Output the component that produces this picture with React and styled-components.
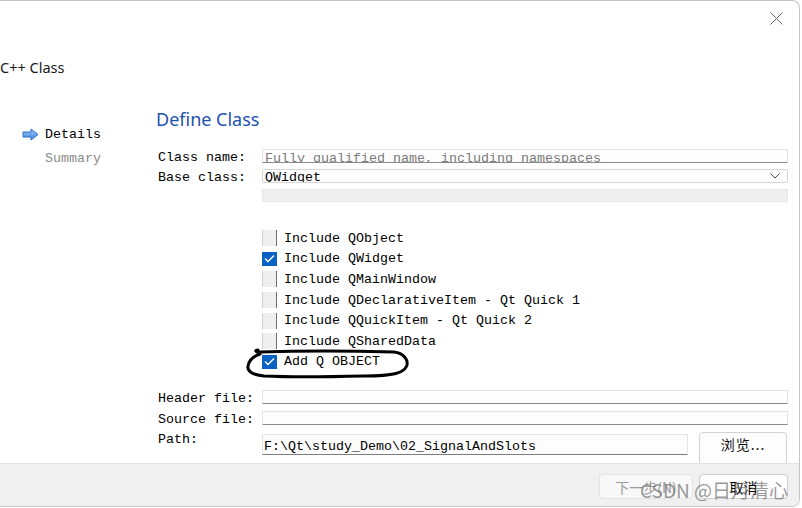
import React from "react";
import styled, { createGlobalStyle } from "styled-components";

const GlobalStyle = createGlobalStyle`
  html, body {
    margin: 0;
    padding: 0;
    background: #ffffff;
  }
  body {
    font-family: "Liberation Mono", "Noto Sans CJK SC", monospace;
    font-size: 13.33px;
    color: #000;
  }
`;

const checks = [
  { label: "Include QObject", checked: false },
  { label: "Include QWidget", checked: true },
  { label: "Include QMainWindow", checked: false },
  { label: "Include QDeclarativeItem - Qt Quick 1", checked: false },
  { label: "Include QQuickItem - Qt Quick 2", checked: false },
  { label: "Include QSharedData", checked: false },
  { label: "Add Q OBJECT", checked: true },
];

const ArrowIcon = () => (
  <svg width="17" height="13" viewBox="0 0 17 13">
    <defs>
      <linearGradient id="arr" x1="0" y1="0" x2="0" y2="1">
        <stop offset="0" stopColor="#9cc7f5" />
        <stop offset="1" stopColor="#3d86de" />
      </linearGradient>
    </defs>
    <path
      d="M1 4 H9 V1 L16 6.5 L9 12 V9 H1 Z"
      fill="url(#arr)"
      stroke="#2a6fc9"
      strokeWidth="1"
      strokeLinejoin="round"
    />
  </svg>
);

const Chevron = () => (
  <svg width="10" height="6" viewBox="0 0 10 6">
    <path d="M0.5 0.5 L5 5 L9.5 0.5" fill="none" stroke="#444" strokeWidth="1" />
  </svg>
);

const Tick = () => (
  <svg width="11" height="9" viewBox="0 0 11 9">
    <path d="M1 4.5 L4 7.5 L10 1.5" fill="none" stroke="#fff" strokeWidth="1.4" />
  </svg>
);

const CloseIcon = () => (
  <svg width="13" height="13" viewBox="0 0 13 13">
    <path d="M0.5 0.5 L12.5 12.5 M12.5 0.5 L0.5 12.5" stroke="#6a6a6a" strokeWidth="1" />
  </svg>
);

const Window = styled.div`
  position: relative;
  width: 799px;
  height: 505px;
  border-top: 1px solid #c4c4c4;
  border-right: 1px solid #c4c4c4;
  border-bottom: 1px solid #c4c4c4;
  border-radius: 0 8px 8px 0;
  overflow: hidden;
  display: flex;
  flex-direction: column;
`;

const TitleBar = styled.div`
  height: 44px;
  display: flex;
  justify-content: flex-end;
  align-items: flex-start;
  padding: 11px 16px 0 0;
  box-sizing: border-box;
`;

const Heading = styled.div`
  height: 55px;
  line-height: 44px;
  font-family: "Noto Sans", "Open Sans", sans-serif;
  font-size: 14.5px;
  color: #1a1a1a;
`;

const Body = styled.div`
  height: 363px;
  display: flex;
  overflow: hidden;
`;

const Sidebar = styled.div`
  width: 156px;
  padding: 22px 0 0 22px;
  box-sizing: border-box;
`;

const NavItem = styled.div`
  height: 24px;
  display: flex;
  align-items: center;
  gap: 6px;
  color: ${(p) => (p.active ? "#000" : "#8a8a8a")};
  padding-left: ${(p) => (p.active ? "0" : "23px")};
`;

const Main = styled.div`
  flex: 1;
  display: flex;
  flex-direction: column;
  padding: 0 11px 0 2px;
`;

const PageTitle = styled.div`
  height: 47px;
  line-height: 38px;
  margin-left: -2px;
  font-family: "Noto Sans", "Open Sans", sans-serif;
  font-size: 18px;
  color: #2152b0;
`;

const FormRow = styled.div`
  display: grid;
  grid-template-columns: 104px 1fr;
  grid-template-rows: ${(p) => p.h || 20}px;
  align-items: ${(p) => (p.top ? "start" : "center")};
  margin-top: ${(p) => p.mt || 0}px;
`;

const Label = styled.div`
  height: 20px;
  box-sizing: border-box;
  line-height: 16px;
  padding-top: 4px;
  white-space: nowrap;
`;

const LineEdit = styled.div`
  height: 14px;
  box-sizing: border-box;
  background: #fdfdfd;
  border: 1px solid #e3e3e3;
  border-bottom-color: #8a8a8a;
  overflow: hidden;
  line-height: 18px;
  padding-left: 2px;
  color: ${(p) => (p.placeholder ? "#7a7a7a" : "#000")};
  white-space: nowrap;
`;

const Combo = styled.div`
  height: 14px;
  box-sizing: border-box;
  background: #fdfdfd;
  border: 1px solid #d6d6d6;
  border-radius: 2px;
  overflow: hidden;
  display: flex;
  align-items: flex-start;
  justify-content: space-between;
  padding: 0 7px 0 2px;
`;

const ComboText = styled.span`
  line-height: 18px;
  margin-top: -1px;
`;

const ComboArrow = styled.span`
  display: flex;
  padding-top: 3px;
`;

const DisabledBar = styled.div`
  height: 13px;
  background: #efefef;
  border: 1px solid #e8e8e8;
  box-sizing: border-box;
`;

const CheckList = styled.div`
  margin: 25.6px 0 0 104px;
  display: flex;
  flex-direction: column;
`;

const CheckRow = styled.div`
  height: 20.67px;
  display: flex;
  align-items: center;
  gap: 7px;
  white-space: nowrap;
`;

const Box = styled.span`
  width: 15px;
  height: ${(p) => (p.checked ? 14 : 16)}px;
  box-sizing: border-box;
  display: flex;
  align-items: center;
  justify-content: center;
  background: ${(p) => (p.checked ? "#0a63c4" : "#efefef")};
  border-left: 1px solid ${(p) => (p.checked ? "#0a63c4" : "#d0d0d0")};
  border-right: 1px solid ${(p) => (p.checked ? "#0a63c4" : "#6e6e6e")};
`;

const PathField = styled.div`
  display: flex;
  gap: 11px;
  align-items: flex-start;
`;

const PathEdit = styled(LineEdit)`
  width: 426px;
  height: 21px;
  margin-top: 6px;
  line-height: 23px;
  padding-left: 1px;
  border-color: #e5e5e5;
  border-bottom-color: #7d7d7d;
`;

const BrowseButton = styled.div`
  width: 88px;
  height: 33px;
  margin-top: 4px;
  box-sizing: border-box;
  border: 1px solid #d3d3d3;
  border-radius: 4px;
  background: #fdfdfd;
  display: flex;
  justify-content: center;
  padding-top: 1px;
  font-family: "Noto Sans CJK SC", sans-serif;
  font-size: 14px;
  letter-spacing: 1px;
  color: #111;
`;

const Footer = styled.div`
  flex: 1;
  background: #f0f0f0;
  border-top: 1px solid #e2e2e2;
  display: flex;
  justify-content: flex-end;
  gap: 6px;
  padding: 10px 11px 0 0;
  box-sizing: border-box;
`;

const DialogButton = styled.div`
  width: ${(p) => p.w}px;
  height: 25px;
  box-sizing: border-box;
  border: 1px solid ${(p) => (p.disabled ? "#e4e4e4" : "#cfcfcf")};
  border-radius: 4px;
  background: ${(p) => (p.disabled ? "#f8f8f8" : "#fdfdfd")};
  color: ${(p) => (p.disabled ? "#9c9c9c" : "#000")};
  font-family: "Noto Sans CJK SC", sans-serif;
  font-size: 14px;
  display: flex;
  align-items: center;
  justify-content: center;
`;

const Watermark = styled.div`
  position: absolute;
  left: 640px;
  top: 476px;
  font-family: "Noto Sans CJK SC", "Noto Sans", sans-serif;
  font-size: 19px;
  color: rgba(110, 110, 110, 0.7);
  white-space: nowrap;
  pointer-events: none;
`;

const Scribble = styled.svg`
  position: absolute;
  left: 244px;
  top: 346px;
  pointer-events: none;
`;

export default function App() {
  return (
    <>
      <GlobalStyle />
      <Window>
        <TitleBar>
          <CloseIcon />
        </TitleBar>
        <Heading>C++ Class</Heading>
        <Body>
          <Sidebar>
            <NavItem active>
              <ArrowIcon />
              Details
            </NavItem>
            <NavItem>Summary</NavItem>
          </Sidebar>
          <Main>
            <PageTitle>Define Class</PageTitle>
            <FormRow>
              <Label>Class name:</Label>
              <LineEdit placeholder>Fully qualified name, including namespaces</LineEdit>
            </FormRow>
            <FormRow>
              <Label>Base class:</Label>
              <Combo>
                <ComboText>QWidget</ComboText>
                <ComboArrow>
                  <Chevron />
                </ComboArrow>
              </Combo>
            </FormRow>
            <FormRow h={13} mt={3}>
              <span />
              <DisabledBar />
            </FormRow>
            <CheckList>
              {checks.map((c) => (
                <CheckRow key={c.label}>
                  <Box checked={c.checked}>{c.checked && <Tick />}</Box>
                  {c.label}
                </CheckRow>
              ))}
            </CheckList>
            <FormRow mt={14.7}>
              <Label>Header file:</Label>
              <LineEdit />
            </FormRow>
            <FormRow h={21}>
              <Label>Source file:</Label>
              <LineEdit />
            </FormRow>
            <FormRow h={35} top>
              <Label>Path:</Label>
              <PathField>
                <PathEdit>F:\Qt\study_Demo\02_SignalAndSlots</PathEdit>
                <BrowseButton>浏览...</BrowseButton>
              </PathField>
            </FormRow>
          </Main>
        </Body>
        <Footer>
          <DialogButton w={94} disabled>
            下一步(N)
          </DialogButton>
          <DialogButton w={89}>取消</DialogButton>
        </Footer>
      </Window>
      <Scribble width="170" height="36" viewBox="0 0 170 36">
        <path
          d="M14 4 C10 4 12 7 16 6 C50 5 110 5 150 6 C160 7 164 14 163 19 C161 27 150 30 120 30 C80 31 40 31 20 30 C8 29 3 25 4 20 C5 14 10 10 16 8"
          fill="none"
          stroke="#000"
          strokeWidth="3"
          strokeLinecap="round"
        />
      </Scribble>
      <Watermark>CSDN @日月清心</Watermark>
    </>
  );
}
